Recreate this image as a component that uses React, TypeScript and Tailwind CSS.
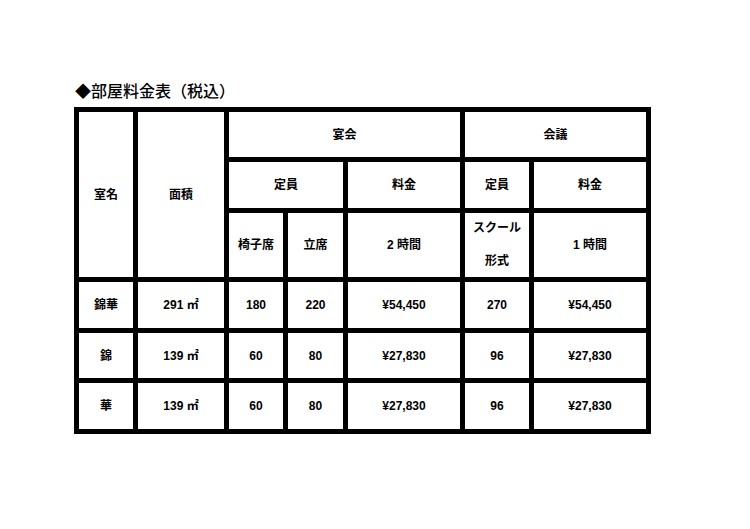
import { Fragment } from 'react';

const rows = [
  { name: '錦華', area: '291 ㎡', chair: '180', stand: '220', price2h: '¥54,450', school: '270', price1h: '¥54,450' },
  { name: '錦', area: '139 ㎡', chair: '60', stand: '80', price2h: '¥27,830', school: '96', price1h: '¥27,830' },
  { name: '華', area: '139 ㎡', chair: '60', stand: '80', price2h: '¥27,830', school: '96', price1h: '¥27,830' },
];

function Cell({ children, className = '' }: { children: React.ReactNode; className?: string }) {
  return (
    <div className={`bg-white flex items-center justify-center text-center text-[12px] font-bold text-black ${className}`}>
      {children}
    </div>
  );
}

export default function App() {
  return (
    <div
      className="w-[750px] h-[529px] bg-white pt-[82px] pl-[74px]"
      style={{ fontFamily: '"Liberation Sans", "Noto Sans CJK JP", sans-serif' }}
    >
      <h2 className="text-[16px] leading-[20px] font-medium text-black mb-[5px] pl-[1px]">◆部屋料金表（税込）</h2>

      <div className="inline-grid bg-black p-[5px] gap-[5px] grid-cols-[54px_86px_54px_55px_112px_64px_112px] grid-rows-[45px_46px_64px_46px_45px_46px]">
        <Cell className="row-span-3">室名</Cell>
        <Cell className="row-span-3">面積</Cell>
        <Cell className="col-span-3">宴会</Cell>
        <Cell className="col-span-2">会議</Cell>

        <Cell className="col-span-2">定員</Cell>
        <Cell>料金</Cell>
        <Cell>定員</Cell>
        <Cell>料金</Cell>

        <Cell>椅子席</Cell>
        <Cell>立席</Cell>
        <Cell>2 時間</Cell>
        <Cell className="flex-col leading-[33px]">
          <span>スクール</span>
          <span>形式</span>
        </Cell>
        <Cell>1 時間</Cell>

        {rows.map((r) => (
          <Fragment key={r.name}>
            <Cell>{r.name}</Cell>
            <Cell>{r.area}</Cell>
            <Cell>{r.chair}</Cell>
            <Cell>{r.stand}</Cell>
            <Cell>{r.price2h}</Cell>
            <Cell>{r.school}</Cell>
            <Cell>{r.price1h}</Cell>
          </Fragment>
        ))}
      </div>
    </div>
  );
}
